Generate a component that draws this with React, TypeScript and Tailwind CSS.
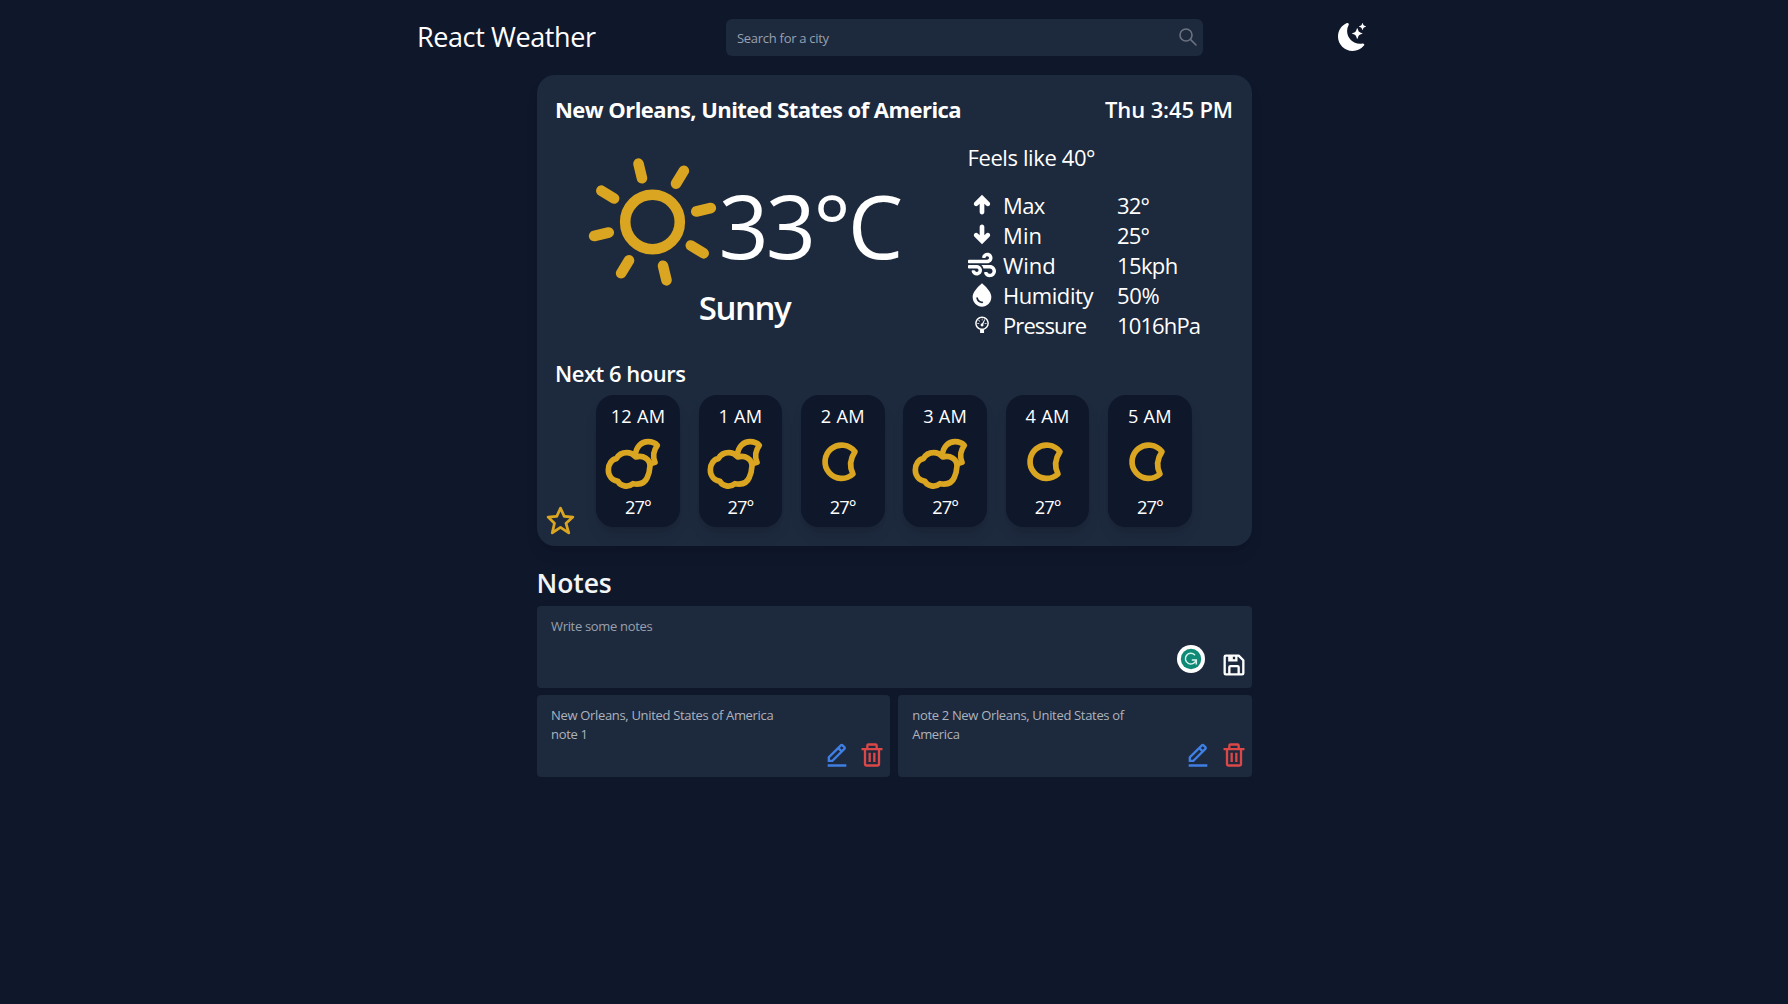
import type { ReactNode } from "react";
import { BsMoonStarsFill } from "react-icons/bs";
import { BiEditAlt, BiSave, BiStar, BiTrash } from "react-icons/bi";
import { FaWind } from "react-icons/fa";
import { MdWaterDrop } from "react-icons/md";
import { TiArrowDownThick, TiArrowUpThick } from "react-icons/ti";
import { WiBarometer } from "react-icons/wi";

const GOLD = "#daa520";
const RAYS = [0, 1, 2, 3, 4, 5, 6, 7];

function SunIcon() {
  return (
    <svg width="130" height="130" viewBox="-64.5 -65 130 130" className="shrink-0" fill="none" stroke={GOLD} strokeWidth="10.6" strokeLinecap="round">
      <circle r="27.3" />
      {RAYS.map((i) => (
        <line key={i} x1="0" y1="-45" x2="0" y2="-60" transform={`rotate(${-13.5 + i * 45})`} />
      ))}
    </svg>
  );
}

function CloudMoonIcon() {
  return (
    <svg width="84" height="63" viewBox="-12 0 252 189" fill="none" stroke={GOLD} strokeWidth="17" strokeLinejoin="round">
      <path d="M106 76 C108 48 126 35 144 35 Q162 35 172 46 Q154 70 165 97 L151 101" />
      <path d="M25 120 C25 101 36 88 49 86 C57 72 68 68 80 68 C92 68 101 74 107 81 C130 74 150 88 150 108 C149 122 147 132 142 142 C134 162 116 164 99 161 C84 174 60 168 54 154 C37 151 25 138 25 120 Z" />
    </svg>
  );
}

function MoonIcon() {
  return (
    <svg width="84" height="63" viewBox="-28 0 252 189" fill="none" stroke={GOLD} strokeWidth="17" strokeLinejoin="round">
      <path d="M134 65 A50 50 0 1 0 128 132 Q111 99 134 65 Z" />
    </svg>
  );
}

function SearchIcon() {
  return (
    <svg width="20" height="20" viewBox="0 0 20 20" fill="none" stroke="#6b7280" strokeWidth="1.6" strokeLinecap="round">
      <circle cx="8" cy="8" r="6" />
      <path d="M12.4 12.4 L18 18" />
    </svg>
  );
}

function GrammarBadge() {
  return (
    <svg width="28" height="28" viewBox="0 0 28 28" fill="none">
      <circle cx="14" cy="14" r="14" fill="#fff" />
      <circle cx="14" cy="14" r="10.2" fill="#0f8a76" />
      <path d="M17.6 9.8 A5.4 5.4 0 1 0 18.9 15.4" stroke="#d9f2ed" strokeWidth="1.5" strokeLinecap="round" />
      <path d="M14.8 15 H19.3 V19.4" stroke="#d9f2ed" strokeWidth="1.5" />
    </svg>
  );
}

const stats: { icon: ReactNode; label: string; value: string; labelClass: string; valueClass: string }[] = [
  { icon: <TiArrowUpThick size={28} />, label: "Max", value: "32°", labelClass: "tracking-[-0.03em]", valueClass: "tracking-[-0.04em]" },
  { icon: <TiArrowDownThick size={28} />, label: "Min", value: "25°", labelClass: "tracking-[0.005em]", valueClass: "tracking-[-0.04em]" },
  { icon: <FaWind size={28} />, label: "Wind", value: "15kph", labelClass: "tracking-[0em]", valueClass: "tracking-[-0.028em]" },
  { icon: <MdWaterDrop size={28} />, label: "Humidity", value: "50%", labelClass: "tracking-[-0.02em]", valueClass: "tracking-[-0.014em]" },
  { icon: <WiBarometer size={28} />, label: "Pressure", value: "1016hPa", labelClass: "tracking-[-0.041em]", valueClass: "tracking-[-0.04em]" },
];

const hours = [
  { time: "12 AM", cloudy: true },
  { time: "1 AM", cloudy: true },
  { time: "2 AM", cloudy: false },
  { time: "3 AM", cloudy: true },
  { time: "4 AM", cloudy: false },
  { time: "5 AM", cloudy: false },
];

const notes = ["New Orleans, United States of America\nnote 1", "note 2 New Orleans, United States of\nAmerica"];

export default function App() {
  return (
    <div className="min-h-screen bg-slate-900 font-['Open_Sans',sans-serif] text-white">
      <header className="mx-auto flex h-[75px] w-[954px] items-start pt-[17px]">
        <h1 className="w-[309px] text-[27px] leading-10 tracking-[-0.015em]">React Weather</h1>
        <div className="mt-[2px] flex h-[37px] w-[477px] items-center justify-between rounded-md bg-slate-800 pr-[5px] pl-[11px]">
          <span className="pt-0.5 text-[13px] tracking-[-0.022em] text-gray-400">Search for a city</span>
          <div className="pb-px">
            <SearchIcon />
          </div>
        </div>
        <BsMoonStarsFill size={28} className="mt-[6px] mr-[5px] ml-auto" />
      </header>

      <main className="mx-auto w-[715px]">
        <section className="relative flex h-[471px] flex-col rounded-[18px] bg-slate-800 px-[18.5px] pt-[17.5px] shadow-lg">
          <div className="flex justify-between text-[22px] leading-8">
            <h2 className="font-bold tracking-[-0.025em]">New Orleans, United States of America</h2>
            <span className="font-semibold tracking-[-0.006em]">Thu 3:45 PM</span>
          </div>

          <div className="mt-[16.5px] flex h-[216px]">
            <div className="w-[412px] pt-4">
              <div className="ml-[32.5px] flex items-start">
                <SunIcon />
                <span className="ml-px mt-6 text-[88px] leading-[88px] tracking-[-0.034em]">33°C</span>
              </div>
              <p className="mt-px w-[379px] text-center text-[33px] leading-10 font-semibold tracking-[-0.043em]">Sunny</p>
            </div>
            <div className="text-[22px]">
              <p className="pl-[0.5px] leading-8 tracking-[-0.018em]">Feels like 40°</p>
              <div className="mt-[18px]">
                {stats.map((s) => (
                  <div key={s.label} className="flex h-[29.9px] items-center leading-[29.9px]">
                    <span className="w-[36px] pb-0.5 pl-[0.5px]">{s.icon}</span>
                    <span className={`w-[114px] ${s.labelClass}`}>{s.label}</span>
                    <span className={s.valueClass}>{s.value}</span>
                  </div>
                ))}
              </div>
            </div>
          </div>

          <h3 className="text-[22px] leading-8 font-semibold tracking-[-0.022em]">Next 6 hours</h3>
          <div className="mt-[6px] flex justify-center gap-[18.6px]">
            {hours.map((h) => (
              <div key={h.time} className="flex h-[132px] w-[83.8px] flex-col items-center rounded-[18px] bg-slate-900 pt-[7px] text-[18.2px] leading-7 shadow-lg">
                <span className="tracking-[0.013em]">{h.time}</span>
                {h.cloudy ? <CloudMoonIcon /> : <MoonIcon />}
                <span className="tracking-[-0.049em]">27°</span>
              </div>
            ))}
          </div>
          <BiStar size={33} color={GOLD} className="absolute bottom-[9px] left-[7.5px]" />
        </section>

        <h2 className="mt-[19px] text-[26.5px] leading-9 font-semibold tracking-[-0.003em] text-gray-100">Notes</h2>
        <div className="relative mt-[5px] h-[82px] rounded-sm bg-slate-800 px-[14.5px] pt-[11px] text-[13px] leading-[18.6px] tracking-[-0.025em] text-gray-400">
          Write some notes
          <div className="absolute right-[47px] bottom-[15px]">
            <GrammarBadge />
          </div>
          <BiSave size={28} className="absolute right-1 bottom-[9px] text-white" />
        </div>

        <div className="mt-[7px] grid grid-cols-2 gap-[7.5px]">
          {notes.map((n) => (
            <div key={n} className="relative h-[82px] rounded-sm bg-slate-800 px-[14.5px] pt-[11.4px]">
              <p className="text-[13px] leading-[18.6px] tracking-[-0.025em] whitespace-pre-line text-[#adb3bd]">{n}</p>
              <div className="absolute right-[4px] bottom-2 flex gap-[7.5px]">
                <BiEditAlt size={28} className="text-[#3f7fe4]" />
                <BiTrash size={28} className="text-[#dc4848]" />
              </div>
            </div>
          ))}
        </div>
      </main>
    </div>
  );
}
